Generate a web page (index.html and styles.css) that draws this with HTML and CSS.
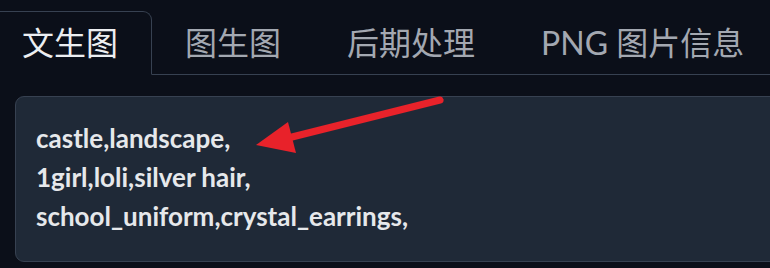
FILE: index.html
```html
<!DOCTYPE html>
<html lang="zh">
<head>
    <meta charset="UTF-8">
    <title>文生图</title>
    <link rel="stylesheet" href="styles.css">
</head>
<body>

    <div class="tabs">
        <button class="tab active">文生图</button>
        <button class="tab">图生图</button>
        <button class="tab">后期处理</button>
        <button class="tab">PNG 图片信息</button>
        <div class="tab-rest"></div>
    </div>

    <div class="prompt">
        <div class="prompt-text">castle,landscape,
1girl,loli,silver hair,
school_uniform,crystal_earrings,</div>

        <!-- annotation arrow -->
        <svg class="arrow" width="210" height="75" viewBox="0 0 210 75">
            <line x1="194" y1="13" x2="38" y2="52" stroke="#e8222a" stroke-width="7" stroke-linecap="round"/>
            <polygon points="10,58 42,35 50,66" fill="#e8222a"/>
        </svg>
    </div>

</body>
</html>
```

FILE: styles.css
```css
body {
    margin: 0;
    background-color: #0b0f19;
    overflow: hidden;
    font-family: Lato, "Noto Sans CJK SC", sans-serif;
}
.tabs {
    display: flex;
    margin-top: 11px;
    margin-left: -12px;
}
.tab {
    flex-shrink: 0;
    white-space: nowrap;
    font-family: Lato, "Noto Sans CJK SC", sans-serif;
    font-size: 32px;
    color: #a3a8b1;
    background: none;
    border: none;
    border-bottom: 1px solid #374151;
    padding: 0 33px;
    height: 64px;
    line-height: 62px;
}
.tab.active {
    color: #eceef1;
    border: 1px solid #374151;
    border-bottom-color: transparent;
    border-radius: 0 9px 0 0;
}
.tab-rest {
    flex: 1;
    border-bottom: 1px solid #374151;
}
.prompt {
    position: relative;
    margin: 21px 0 0 15px;
    width: 800px;
    height: 166px;
    background: #1f2937;
    border: 1px solid #374151;
    border-radius: 9px;
    box-sizing: border-box;
}
.prompt-text {
    white-space: pre;
    color: #e6e8eb;
    font-family: Lato, sans-serif;
    font-weight: bold;
    font-size: 26px;
    line-height: 39px;
    padding: 22px 20px;
}
.arrow {
    position: absolute;
    left: 230px;
    top: -10px;
}
```
